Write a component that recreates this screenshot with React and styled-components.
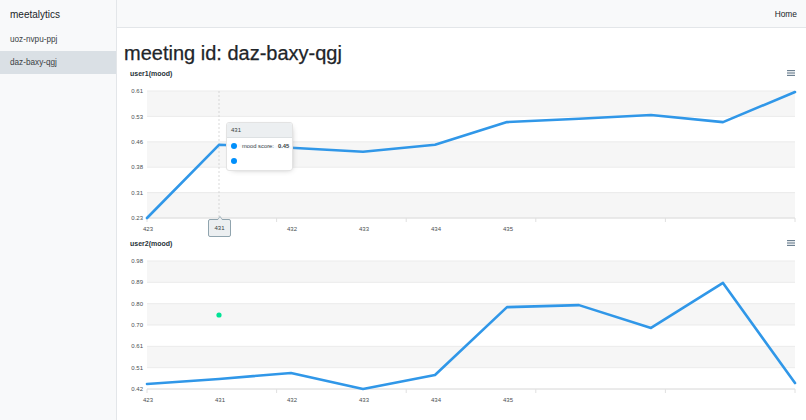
import React from 'react'
import styled, { createGlobalStyle } from 'styled-components'

const GlobalStyle = createGlobalStyle`
  html, body { margin: 0; padding: 0; background: #fff; }
  body { font-family: "Liberation Sans", Arial, sans-serif; color: #212529; }
  * { box-sizing: border-box; }
`

const Layout = styled.div`
  display: flex;
  width: 806px;
  height: 420px;
  overflow: hidden;
`

const Sidebar = styled.nav`
  width: 117px;
  flex-shrink: 0;
  background: #f8f9fa;
  border-right: 1px solid #e3e6e9;
  display: flex;
  flex-direction: column;
`

const Brand = styled.div`
  height: 28px;
  display: flex;
  align-items: center;
  padding-left: 10px;
  font-size: 10px;
  color: #212529;
`

const SideItem = styled.div`
  height: 23px;
  display: flex;
  align-items: center;
  padding-left: 10px;
  font-size: 8.2px;
  color: #3a3f44;
  background: ${p => (p.active ? '#dae0e5' : 'transparent')};
`

const Main = styled.div`
  flex: 1;
  display: flex;
  flex-direction: column;
  min-width: 0;
`

const Navbar = styled.header`
  height: 28px;
  background: #f8f9fa;
  border-bottom: 1px solid #e3e6e9;
  display: flex;
  justify-content: flex-end;
  align-items: center;
  padding-right: 9px;
  font-size: 8.4px;
  color: #212529;
`

const Content = styled.div`
  padding: 0 6px 0 7px;
`

const Title = styled.h1`
  margin: 13px 0 1px;
  font-size: 20px;
  line-height: 24px;
  font-weight: 500;
  color: #212529;
  -webkit-text-stroke: 0.25px #212529;
`

const ChartBlock = styled.div`
  position: relative;
`

const ChartHeader = styled.div`
  height: 14px;
  display: flex;
  justify-content: space-between;
  align-items: center;
  padding: 0 5px 0 6px;
`

const ChartTitle = styled.span`
  font-size: 7px;
  font-weight: bold;
  color: #263238;
`

const Tooltip = styled.div`
  position: absolute;
  left: 102px;
  top: 56px;
  width: 67px;
  height: 49px;
  background: rgba(255, 255, 255, 0.96);
  border: 1px solid #e3e3e3;
  border-radius: 3px;
  box-shadow: 2px 2px 6px -4px #999;
  font-size: 5.8px;
  color: #373d3f;
  overflow: hidden;
`

const TooltipHead = styled.div`
  height: 15px;
  background: #eceff1;
  border-bottom: 1px solid #dde1e3;
  display: flex;
  align-items: center;
  padding-left: 4px;
  font-size: 6px;
`

const TooltipRow = styled.div`
  height: 15px;
  display: flex;
  align-items: center;
  padding-left: 4px;
  gap: 5px;
`

const Dot = styled.span`
  width: 6px;
  height: 6px;
  border-radius: 50%;
  background: #008ffb;
  flex-shrink: 0;
`

const Value = styled.b`
  margin-left: 4px;
  font-weight: bold;
`

const AxisTip = styled.div`
  position: absolute;
  left: 84px;
  top: 153px;
  width: 23px;
  height: 18px;
  background: #eceff1;
  border: 1px solid #90a4ae;
  border-radius: 2px;
  display: flex;
  align-items: center;
  justify-content: center;
  font-size: 6px;
  color: #373d3f;
  &::before {
    content: '';
    position: absolute;
    top: -4px;
    left: 8px;
    border: 3px solid transparent;
    border-top: 0;
    border-bottom: 4px solid #90a4ae;
  }
  &::after {
    content: '';
    position: absolute;
    top: -3px;
    left: 8px;
    border: 3px solid transparent;
    border-top: 0;
    border-bottom: 4px solid #eceff1;
  }
`

const PLOT_LEFT = 23
const PLOT_RIGHT = 671
const xLabels = ['423', '431', '432', '433', '434', '435']

function MenuIcon() {
  return (
    <svg width="8" height="6" viewBox="0 0 8 6">
      <rect x="0" y="0" width="8" height="1.2" fill="#6e8192" />
      <rect x="0" y="2.4" width="8" height="1.2" fill="#6e8192" />
      <rect x="0" y="4.8" width="8" height="1.2" fill="#6e8192" />
    </svg>
  )
}

function LineChart({ height, bottom, values, min, max, yLabels, crosshair, marker }) {
  const top = 11
  const step = (PLOT_RIGHT - PLOT_LEFT) / (values.length - 1)
  const toY = v => bottom - ((v - min) / (max - min)) * (bottom - top)
  const rows = yLabels.length - 1
  const rowH = (bottom - top) / rows
  const pts = values.map((v, i) => `${PLOT_LEFT + i * step},${toY(v)}`).join(' ')
  const ticks = [0, 1, 2, 3, 4, 5].map(i => PLOT_LEFT + i * ((PLOT_RIGHT - PLOT_LEFT) / 5))

  return (
    <svg width="676" height={height} style={{ display: 'block' }} fontFamily='"Liberation Sans", Arial, sans-serif'>
      {Array.from({ length: rows }).map((_, i) => (
        <rect key={'b' + i} x={PLOT_LEFT} y={top + i * rowH} width={PLOT_RIGHT - PLOT_LEFT} height={rowH}
          fill={i % 2 === 0 ? '#f6f6f6' : '#ffffff'} />
      ))}
      {yLabels.map((l, i) => (
        <g key={'g' + i}>
          <line x1={PLOT_LEFT} x2={PLOT_RIGHT} y1={top + i * rowH} y2={top + i * rowH} stroke="#ebebeb" />
          <text x="19" y={top + i * rowH} dy="2.1" fontSize="6" fill="#4a4f52" textAnchor="end">{l}</text>
        </g>
      ))}
      <line x1={PLOT_LEFT} x2={PLOT_RIGHT} y1={bottom} y2={bottom} stroke="#e0e0e0" />
      {ticks.map((t, i) => (
        <line key={'t' + i} x1={t} x2={t} y1={bottom} y2={bottom + 4} stroke="#e0e0e0" />
      ))}
      {xLabels.map((l, i) => (
        <text key={'x' + i} x={PLOT_LEFT + 1 + i * step} y={bottom + 13} fontSize="6" fill="#4a4f52" textAnchor="middle">{l}</text>
      ))}
      {crosshair && (
        <line x1={PLOT_LEFT + step} x2={PLOT_LEFT + step} y1={top} y2={bottom} stroke="#cfcfcf" strokeWidth="0.8" strokeDasharray="2 2" />
      )}
      <polyline points={pts} fill="none" stroke="#3097e8" strokeWidth="2.6" strokeLinejoin="round" strokeLinecap="round" />
      {marker && <circle cx={marker.x} cy={marker.y} r="2.6" fill="#00e396" />}
    </svg>
  )
}

const user1 = [0.23, 0.449, 0.44, 0.428, 0.449, 0.517, 0.527, 0.538, 0.517, 0.607]
const user2 = [0.442, 0.464, 0.49, 0.42, 0.481, 0.778, 0.787, 0.687, 0.884, 0.446]

export default function App() {
  return (
    <>
      <GlobalStyle />
      <Layout>
        <Sidebar>
          <Brand>meetalytics</Brand>
          <SideItem>uoz-nvpu-ppj</SideItem>
          <SideItem active>daz-baxy-qgj</SideItem>
        </Sidebar>
        <Main>
          <Navbar>Home</Navbar>
          <Content>
            <Title>meeting id: daz-baxy-qgj</Title>
            <ChartBlock>
              <ChartHeader>
                <ChartTitle>user1(mood)</ChartTitle>
                <MenuIcon />
              </ChartHeader>
              <LineChart height={156} bottom={138} values={user1} min={0.23} max={0.61}
                yLabels={['0.61', '0.53', '0.46', '0.38', '0.31', '0.23']} crosshair />
              <Tooltip>
                <TooltipHead>431</TooltipHead>
                <TooltipRow><Dot /><span>mood score:<Value>0.45</Value></span></TooltipRow>
                <TooltipRow><Dot /></TooltipRow>
              </Tooltip>
              <AxisTip>431</AxisTip>
            </ChartBlock>
            <ChartBlock>
              <ChartHeader>
                <ChartTitle>user2(mood)</ChartTitle>
                <MenuIcon />
              </ChartHeader>
              <LineChart height={170} bottom={139} values={user2} min={0.42} max={0.98}
                yLabels={['0.98', '0.89', '0.80', '0.70', '0.61', '0.51', '0.42']} marker={{ x: 95, y: 65 }} />
            </ChartBlock>
          </Content>
        </Main>
      </Layout>
    </>
  )
}
